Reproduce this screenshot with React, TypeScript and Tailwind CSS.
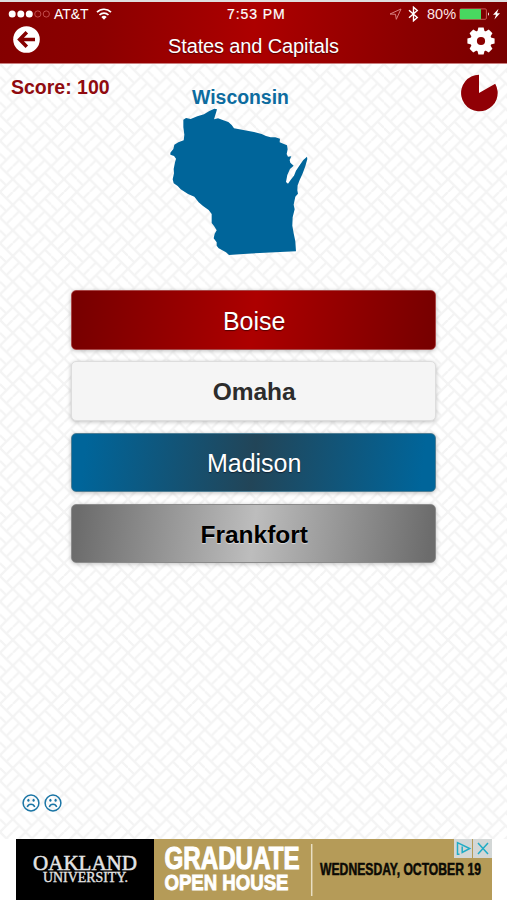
import React from "react";

type Answer = { label: string; look: string };

const answers: Answer[] = [
  {
    label: "Boise",
    look: "border-[#a84848] bg-[linear-gradient(97deg,#780000_2%,#ad0000_50%,#780000_98%)] text-[25px] text-white [text-shadow:0_1px_1px_#500]",
  },
  {
    label: "Omaha",
    look: "border-[#dddddd] bg-[#f5f5f5] text-[24.5px] font-bold text-[#2c2c2c]",
  },
  {
    label: "Madison",
    look: "border-[#507f95] bg-[linear-gradient(97deg,#00659a_4%,#224558_50%,#00659a_96%)] text-[25px] text-white [text-shadow:0_1px_1px_#123]",
  },
  {
    label: "Frankfort",
    look: "border-[#8c8c8c] bg-[linear-gradient(97deg,#6c6c6c_2%,#bdbdbd_50%,#6c6c6c_98%)] text-[24.5px] font-bold text-black [text-shadow:0_1px_1px_#ddd]",
  },
];

function Weave() {
  return (
    <svg className="absolute inset-0 -z-10 h-full w-full" aria-hidden="true">
      <defs>
        <pattern id="weave" width="25.6" height="25.6" patternUnits="userSpaceOnUse">
          <path
            d="M-1 -1L5 5M5 -1L-1 5M1 1L2 0M3 3L2 4M0 2L1 3M3 1L4 2"
            transform="scale(6.4)"
            stroke="#f4f4f4"
            strokeWidth="0.36"
            fill="none"
          />
        </pattern>
      </defs>
      <rect width="100%" height="100%" fill="url(#weave)" />
    </svg>
  );
}

function Wisconsin() {
  return (
    <svg className="mt-[-0.5px] -ml-[2px] h-[147.3px] w-[138px]" viewBox="30 84 414 442">
      <path
        fill="#00659a"
        d="M70 119L78 114L92 117L112 109L132 103L148 93L163 86L171 88L168 98L162 118L174 115L190 121L205 126L215 135L222 145L250 150L282 156L305 162L318 168L332 172L346 172L360 176L359 187L370 191L381 196L383 208L380 222L384 230L394 229L389 240L391 248L401 257L390 267L382 285L378 306L384 311L394 297L402 287L408 272L421 253L430 240L441 230L442 237L436 259L427 283L419 300L413 316L412 331L414 341L406 350L401 374L404 388L398 412L397 437L401 460L406 484L408 514L360 516L300 519L250 522L207 525L198 517L176 505L170 497L170 487L161 475L164 461L170 451L162 438L155 429L155 402L146 390L129 378L116 367L103 350L84 342L62 328L53 318L41 310L38 298L42 280L41 267L45 247L48 236L42 228L31 224L31 218L40 207L43 194L55 187L71 181L73 164L70 142Z"
      />
    </svg>
  );
}

function Gear() {
  return (
    <svg className="mt-[0.5px] h-[28px] w-[28px]" viewBox="-14 -14 28 28">
      <g fill="#fff">
        {[0, 45, 90, 135].map((a) => (
          <path key={a} transform={`rotate(${a})`} d="M-2.6 -13.6H2.6L3.8 -9V9L2.6 13.6H-2.6L-3.8 9V-9Z" />
        ))}
        <circle r="10.6" />
      </g>
      <circle r="4.1" fill="#8a0000" />
    </svg>
  );
}

function StatusBar() {
  return (
    <div className="flex h-[24px] items-center text-[13.5px] leading-none">
      <svg className="ml-[8px] h-[8px] w-[43px]" viewBox="0 0 43 8">
        {[4.2, 12.8, 21.3].map((x) => (
          <circle key={x} cx={x} cy="4" r="3.5" fill="#fff" />
        ))}
        {[29.8, 38.3].map((x) => (
          <circle key={x} cx={x} cy="4" r="3.1" fill="none" stroke="#d06060" strokeWidth="0.8" />
        ))}
      </svg>
      <span className="ml-[3px] w-[35px] whitespace-nowrap text-[14px] tracking-[-0.05px]">AT&amp;T</span>
      <svg className="ml-[7px] h-[12px] w-[16px]" viewBox="0 0 16 12" fill="none" stroke="#fff" strokeWidth="1.7">
        <path d="M1 4.1A10 10 0 0 1 15 4.1M3.5 7A6.4 6.4 0 0 1 12.5 7" />
        <path d="M5.3 8.9A4 4 0 0 1 10.7 8.9L8 11.7Z" fill="#fff" stroke="none" />
      </svg>
      <span className="ml-[115px] w-[61px] whitespace-nowrap text-[14px] tracking-[0.9px] [-webkit-text-stroke:0.2px_white]">7:53 PM</span>
      <svg className="ml-[101px] h-[12px] w-[13px]" viewBox="0 0 13 12" fill="none" stroke="#d88080" strokeWidth="1">
        <path d="M1 6L12 1L7.3 11.3L6.5 6.3Z" />
      </svg>
      <svg className="ml-[6px] h-[16px] w-[11px]" viewBox="0 0 11 16" fill="none" stroke="#fff" strokeWidth="1.4">
        <path d="M1 4.2L9.3 11.5L5.5 14.8V1.2L9.3 4.5L1 11.8" />
      </svg>
      <span className="ml-[8px] w-[30px] text-[14.5px] text-[#ffe6e6]">80%</span>
      <svg className="ml-[2px] h-[12px] w-[41px]" viewBox="0 0 41 12">
        <rect x="0.9" y="0.9" width="26.5" height="10.4" rx="1.2" fill="none" stroke="#d06060" strokeWidth="0.9" />
        <rect x="1" y="1" width="21" height="10.2" fill="#48d860" />
        <path d="M29 4.2Q31 6 29 7.8Z" fill="#fff" />
        <path d="M39.5 0.8L34 6.8H37L35.4 11.4L41 5.3H38Z" fill="#fff" />
      </svg>
    </div>
  );
}

function SadFace() {
  return (
    <svg className="h-[18px] w-[18px]" viewBox="0 0 18 18" fill="none" stroke="#1a75a5" strokeWidth="1.5">
      <circle cx="9" cy="9" r="7.9" />
      <path d="M5.3 13Q6.3 10.3 9 10.3T12.7 13" />
      <ellipse cx="6.4" cy="6.3" rx="1.1" ry="1.5" fill="#1a75a5" stroke="none" />
      <ellipse cx="11.6" cy="6.3" rx="1.1" ry="1.5" fill="#1a75a5" stroke="none" />
    </svg>
  );
}

function AdBanner() {
  return (
    <div className="flex h-[61.5px] bg-white px-[15.5px]">
      <div className="relative flex h-full w-full bg-[#b59b58]">
        <svg className="h-[62px] w-[138px] bg-black" viewBox="0 0 138 62">
          <g fill="#e4e4e4" stroke="#e4e4e4" fontFamily="'Liberation Serif', serif">
            <text x="17" y="31" fontSize="21.5" strokeWidth="0.5" textLength="104" lengthAdjust="spacingAndGlyphs">OAKLAND</text>
            <text x="27" y="43.3" fontSize="14.5" strokeWidth="0.35" textLength="85" lengthAdjust="spacingAndGlyphs">UNIVERSITY.</text>
          </g>
        </svg>
        <svg className="h-[62px] w-[338px]" viewBox="0 0 338 62">
          <g fontFamily="'Liberation Sans', sans-serif" fontWeight="bold">
            <g fill="#fff" stroke="#fff">
              <text transform="translate(10.5 30.4) scale(.75 1)" fontSize="31" strokeWidth="1.1" textLength="180" lengthAdjust="spacingAndGlyphs">GRADUATE</text>
              <text transform="translate(10.5 50.6) scale(.8 1)" fontSize="22.5" strokeWidth="0.9" textLength="155" lengthAdjust="spacingAndGlyphs">OPEN HOUSE</text>
            </g>
            <text transform="translate(166 36) scale(.77 1)" fontSize="16" fill="#0b0a05" stroke="#0b0a05" strokeWidth="0.5" textLength="209" lengthAdjust="spacingAndGlyphs">WEDNESDAY, OCTOBER 19</text>
          </g>
          <path d="M157.7 5V57" stroke="#e9dfc4" strokeWidth="1.5" />
        </svg>
        <svg className="absolute top-0 right-0 h-[19px] w-[38px]" viewBox="0 0 38 19">
          <path d="M0 0H18V19H0ZM19 0H38V19H19Z" fill="#d3d7d6" />
          <g fill="none" stroke="#20acc6" strokeWidth="1.5">
            <path d="M5.5 15.3H3.5V3.6L15.7 9.5L8.2 13.4V7.6" />
            <path d="M24 4L34 15M34 4L24 15" />
          </g>
        </svg>
      </div>
    </div>
  );
}

export default function App() {
  return (
    <main className="flex h-[900px] w-[507px] flex-col overflow-hidden bg-white font-['Liberation_Sans',Arial,sans-serif]">
      <header className="h-[63.5px] border-t-2 border-b border-t-[#dedede] border-b-[#c98080] bg-[linear-gradient(97deg,#840000_0%,#8b0000_20%,#ad0000_50%,#8b0000_80%,#780000_100%)] text-white">
        <StatusBar />
        <div className="flex h-[38px] items-start justify-between pr-[12px] pl-[13px]">
          <svg className="h-[27px] w-[27px]" viewBox="0 0 27 27">
            <circle cx="13.5" cy="13.5" r="13.3" fill="#fff" />
            <path d="M22 13.5H7M13.8 6.3L6.7 13.5L13.8 20.7" fill="none" stroke="#850000" strokeWidth="3.6" />
          </svg>
          <h1 className="mt-[4.5px] text-[20px] leading-[30px] tracking-[-0.13px] whitespace-nowrap [text-shadow:0_1px_1px_#500]">States and Capitals</h1>
          <Gear />
        </div>
      </header>

      <section className="relative isolate flex flex-1 flex-col">
        <Weave />
        <div className="grid h-[226.5px] grid-cols-[1fr_140px_1fr] items-start">
          <p className="mt-[11px] ml-[11px] text-[19.5px] leading-[24px] font-bold text-[#900a0f]">Score: 100</p>
          <div className="mt-[22px] -ml-[14px] flex w-[140px] flex-col items-center">
            <h2 className="pl-[2px] text-[19.4px] leading-[23px] font-bold text-[#0d6c9f]">Wisconsin</h2>
            <Wisconsin />
          </div>
          <svg className="mt-[10.5px] mr-[9px] h-[38px] w-[38px] justify-self-end" viewBox="-19 -19 38 38">
            <path d="M0 0V-18.3A18.3 18.3 0 1 0 16.2 -9.2Z" fill="#900005" />
          </svg>
        </div>

        <div className="ml-[71px] flex w-[365.4px] flex-col gap-[11.7px]">
          {answers.map((a) => (
            <button
              key={a.label}
              className={`h-[59.6px] rounded-[5px] border pt-[3px] pl-[1px] text-center leading-none shadow-[0_1px_4px_rgba(0,0,0,0.25)] ${a.look}`}
            >
              {a.label}
            </button>
          ))}
        </div>

        <div className="mt-auto mb-[27px] ml-[22px] flex gap-[4px]">
          <SadFace />
          <SadFace />
        </div>
      </section>

      <AdBanner />
    </main>
  );
}
